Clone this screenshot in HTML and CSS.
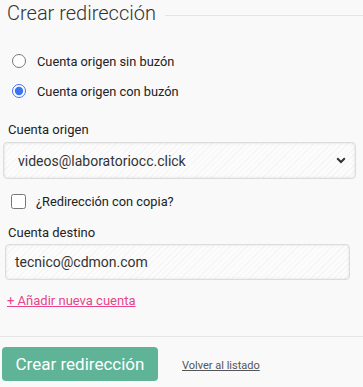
FILE: index.html
```html
<!DOCTYPE html>
<html lang="es">
<head>
    <meta charset="UTF-8">
    <meta name="viewport" content="width=device-width, initial-scale=1.0">
    <title>Crear redirección</title>
    <link rel="stylesheet" href="styles.css">
</head>
<body>
    <div class="form-box">
        <div class="legend">
            <span class="legend-title">Crear redirección</span>
            <span class="legend-line"></span>
        </div>

        <div class="radio-group">
            <label class="radio-row">
                <input type="radio" name="tipo">
                <span>Cuenta origen sin buzón</span>
            </label>
            <label class="radio-row">
                <input type="radio" name="tipo" checked>
                <span>Cuenta origen con buzón</span>
            </label>
        </div>

        <p class="field-label">Cuenta origen</p>
        <div class="select-box">
            <span>videos@laboratoriocc.click</span>
            <svg class="arrow" width="10" height="7" viewBox="0 0 10 7">
                <path d="M1.2 1.3 L5 5 L8.8 1.3" fill="none" stroke="#333" stroke-width="2"/>
            </svg>
        </div>

        <label class="check-row">
            <input type="checkbox">
            <span>¿Redirección con copia?</span>
        </label>

        <p class="field-label dest">Cuenta destino</p>
        <div class="text-box">tecnico@cdmon.com</div>

        <a href="#" class="add-link">+ Añadir nueva cuenta</a>
    </div>

    <div class="actions">
        <button class="btn-create">Crear redirección</button>
        <a href="#" class="back-link">Volver al listado</a>
    </div>
</body>
</html>
```
FILE: styles.css
```css
* {
    font-family: Roboto, "Liberation Sans", sans-serif;
    box-sizing: border-box;
}

body {
    margin: 0;
    background-color: #f9f9f9;
    color: #222;
    width: 363px;
    height: 387px;
    overflow: hidden;
}

.legend {
    display: flex;
    align-items: center;
    height: 28px;
    padding-left: 7px;
}

.legend-title {
    font-size: 20px;
    font-weight: 300;
    color: #333;
    margin-right: 9px;
    margin-top: -2px;
}

.legend-line {
    flex: 1;
    height: 1px;
    background-color: #e4e4e4;
    margin-top: 3px;
}

.radio-group {
    display: flex;
    flex-direction: column;
    gap: 14px;
    margin-top: 25px;
    padding-left: 12px;
}

.radio-row {
    display: flex;
    align-items: center;
    height: 16px;
    font-size: 12.8px;
    color: #222;
}

.radio-row input {
    width: 14px;
    height: 14px;
    margin: 0 11px 0 0;
    accent-color: #3b73f5;
}

.field-label {
    font-size: 13px;
    color: #222;
    margin: 23px 0 0 8px;
    line-height: 16px;
}

.field-label.dest {
    margin-top: 14px;
}

.select-box {
    display: flex;
    align-items: center;
    justify-content: space-between;
    margin: 4px 0 0 3px;
    width: 353px;
    height: 37px;
    padding: 0 9px 0 14px;
    border: 1px solid #dcdcdc;
    border-radius: 4px;
    box-shadow: inset 0 0 3px rgba(0, 0, 0, 0.12);
    background: repeating-linear-gradient(135deg, #fcfcfc 0 3px, #f5f5f5 3px 4px);
    font-size: 14px;
    color: #333;
}

.check-row {
    display: flex;
    align-items: center;
    margin: 12px 0 0 11px;
    height: 20px;
    font-size: 12.8px;
    color: #222;
}

.check-row input {
    width: 15px;
    height: 15px;
    margin: 0 10px 0 0;
}

.text-box {
    display: flex;
    align-items: center;
    margin: 3px 0 0 5px;
    width: 345px;
    height: 36px;
    padding-left: 9px;
    border: 1px solid #dcdcdc;
    border-radius: 4px;
    box-shadow: inset 0 0 3px rgba(0, 0, 0, 0.1);
    background: repeating-linear-gradient(135deg, #fcfcfc 0 3px, #f5f5f5 3px 4px);
    font-size: 14px;
    color: #333;
}

.add-link {
    display: inline-block;
    margin: 13px 0 0 7px;
    font-size: 13px;
    color: #e8458b;
}

.actions {
    display: flex;
    align-items: center;
    gap: 24px;
    margin-top: 27px;
    border-top: 1px solid #e6e6e6;
    padding: 10px 0 0 2px;
}

.btn-create {
    width: 156px;
    height: 34px;
    border: none;
    border-radius: 4px;
    background-color: #5fb397;
    color: white;
    font-size: 17px;
    padding: 0;
    cursor: pointer;
}

.back-link {
    font-size: 11px;
    color: #555;
    margin-top: 2px;
}
```
